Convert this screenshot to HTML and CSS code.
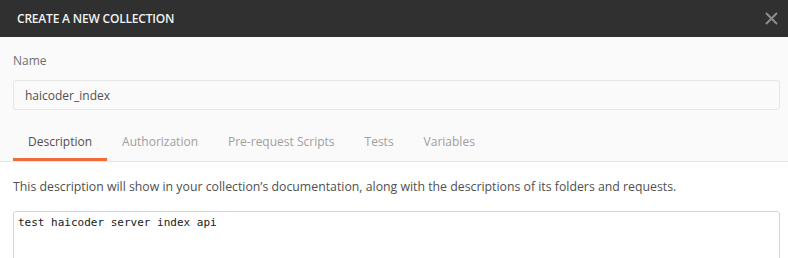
FILE: index.html
```html
<!DOCTYPE html>
<html lang="en">
<head>
  <meta charset="UTF-8">
  <title>Create a new collection</title>
  <link rel="stylesheet" href="styles.css">
</head>
<body>

  <div class="modal">
    <div class="modal-header">
      <span class="modal-title">CREATE A NEW COLLECTION</span>
      <span class="modal-close">
        <svg width="13" height="13" viewBox="0 0 13 13">
          <path d="M1 1 L12 12 M12 1 L1 12" stroke="#8c8c8c" stroke-width="2" fill="none"/>
        </svg>
      </span>
    </div>

    <div class="modal-top">
      <label class="field-label" for="collectionName">Name</label>
      <input type="text" id="collectionName" class="text-input" value="haicoder_index">

      <div class="tabs">
        <div class="tab active">Description</div>
        <div class="tab">Authorization</div>
        <div class="tab">Pre-request Scripts</div>
        <div class="tab">Tests</div>
        <div class="tab">Variables</div>
      </div>
    </div>

    <div class="modal-content">
      <p class="help-text">This description will show in your collection’s documentation, along with the descriptions of its folders and requests.</p>
      <textarea class="desc-input">test haicoder server index api</textarea>
    </div>
  </div>

</body>
</html>
```

FILE: styles.css
```css
body {
  margin: 0;
  font-family: 'Open Sans', 'Noto Sans', sans-serif;
  background-color: #ffffff;
  color: #505050;
  overflow: hidden;
}

.modal {
  width: 788px;
  height: 258px;
  overflow: hidden;
}

.modal-header {
  height: 37px;
  background-color: #303030;
  display: flex;
  align-items: center;
  justify-content: space-between;
  padding: 0 5px 0 17px;
}

.modal-title {
  color: #f0f0f0;
  font-size: 12px;
  font-weight: 600;
  letter-spacing: -0.2px;
}

.modal-close {
  display: flex;
  padding: 0 5px 0 0;
}

.modal-top {
  background-color: #fafafa;
  padding: 15px 8px 0 13px;
  border-bottom: 1px solid #e6e6e6;
}

.field-label {
  display: block;
  font-size: 12px;
  color: #707070;
  line-height: 17px;
  margin-bottom: 11px;
}

.text-input {
  box-sizing: border-box;
  width: 100%;
  height: 30px;
  padding: 0 11px;
  font-family: inherit;
  font-size: 12px;
  color: #505050;
  background-color: #fafafa;
  border: 1px solid #e6e6e6;
  border-radius: 3px;
  outline: none;
}

.tabs {
  display: flex;
  margin-top: 11px;
}

.tab {
  padding: 12px 15px 8px;
  font-size: 12px;
  line-height: 17px;
  color: #a0a0a0;
  border-bottom: 3px solid transparent;
}

.tab.active {
  color: #505050;
  border-bottom-color: #f26b3a;
}

.modal-content {
  padding: 0 8px 0 13px;
}

.help-text {
  margin: 16px 0 0;
  font-size: 12.3px;
  line-height: 17px;
  color: #505050;
}

.desc-input {
  display: block;
  box-sizing: border-box;
  width: 100%;
  height: 80px;
  margin-top: 16px;
  padding: 4px 4px;
  font-family: 'DejaVu Sans Mono', monospace;
  font-size: 11px;
  color: #202020;
  border: 1px solid #d6d6d6;
  border-radius: 3px;
  resize: none;
  outline: none;
}
```
